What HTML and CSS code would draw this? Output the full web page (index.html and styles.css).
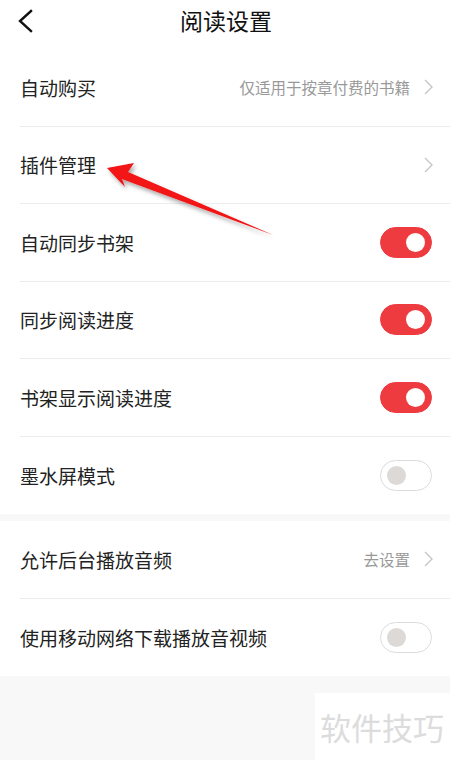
FILE: index.html
```html
<!DOCTYPE html>
<html lang="zh-CN">
<head>
<meta charset="utf-8">
<title>阅读设置</title>
<link rel="stylesheet" href="styles.css">
</head>
<body>
<div class="page">
  <header class="header">
    <svg class="back" width="16" height="24" viewBox="0 0 16 24"><path d="M14 2 L3 12 L14 22" fill="none" stroke="#111" stroke-width="2.4" stroke-linecap="square"/></svg>
    <h1 class="title">阅读设置</h1>
  </header>
  <section class="group">
    <div class="row"><span class="label">自动购买</span><span class="right"><span class="hint">仅适用于按章付费的书籍</span><svg class="chev" width="9" height="16" viewBox="0 0 9 16"><path d="M1 1 L8 8 L1 15" fill="none" stroke="#c6c6c6" stroke-width="1.4"/></svg></span></div>
    <div class="row"><span class="label">插件管理</span><span class="right"><svg class="chev" width="9" height="16" viewBox="0 0 9 16"><path d="M1 1 L8 8 L1 15" fill="none" stroke="#c6c6c6" stroke-width="1.4"/></svg></span></div>
    <div class="row"><span class="label">自动同步书架</span><span class="toggle on"><span class="knob"></span></span></div>
    <div class="row"><span class="label">同步阅读进度</span><span class="toggle on"><span class="knob"></span></span></div>
    <div class="row"><span class="label">书架显示阅读进度</span><span class="toggle on"><span class="knob"></span></span></div>
    <div class="row last"><span class="label">墨水屏模式</span><span class="toggle"><span class="knob"></span></span></div>
  </section>
  <section class="group">
    <div class="row"><span class="label">允许后台播放音频</span><span class="right"><span class="hint">去设置</span><svg class="chev" width="9" height="16" viewBox="0 0 9 16"><path d="M1 1 L8 8 L1 15" fill="none" stroke="#c6c6c6" stroke-width="1.4"/></svg></span></div>
    <div class="row last"><span class="label">使用移动网络下载播放音视频</span><span class="toggle"><span class="knob"></span></span></div>
  </section>
  <div class="rest"></div>
</div>
<svg class="arrow" width="450" height="260" viewBox="0 0 450 260">
  <defs>
    <filter id="sh" x="-20%" y="-20%" width="140%" height="160%">
      <feDropShadow dx="2" dy="3" stdDeviation="2" flood-color="#000" flood-opacity="0.35"/>
    </filter>
  </defs>
  <polygon points="107,168 134,163 128,172 273,235 122,179 125,187" fill="#f21212" filter="url(#sh)"/>
</svg>
<div class="watermark">软件技巧</div>
</body>
</html>
```
FILE: styles.css
```css
html, body {
  margin: 0;
  padding: 0;
  background: #f8f8f8;
}
body {
  font-family: "Noto Sans CJK SC", "Noto Sans", sans-serif;
  color: #222;
  width: 450px;
  height: 760px;
  overflow: hidden;
  position: relative;
}
.page {
  display: flex;
  flex-direction: column;
  height: 760px;
}
.header {
  height: 49px;
  background: #fff;
  display: flex;
  align-items: flex-start;
  justify-content: center;
  position: relative;
}
.back {
  position: absolute;
  left: 17px;
  top: 9px;
}
.title {
  margin: 0;
  font-size: 23px;
  font-weight: 400;
  line-height: 40px;
  color: #111;
  padding-left: 2px;
}
.group {
  background: #fff;
  padding-left: 20px;
  margin-bottom: 7px;
}
.group:last-of-type {
  margin-bottom: 0;
}
.row {
  height: 77.5px;
  box-sizing: border-box;
  border-bottom: 1px solid #ececec;
  display: flex;
  align-items: center;
  justify-content: space-between;
  padding-right: 18px;
}
.row.last {
  border-bottom: none;
}
.label {
  font-size: 19px;
  color: #222;
}
.right {
  display: flex;
  align-items: center;
  gap: 14px;
}
.hint {
  font-size: 15.5px;
  color: #999;
}
.chev {
  display: block;
  margin-right: -1px;
}
.toggle {
  width: 52px;
  height: 31px;
  box-sizing: border-box;
  border-radius: 16px;
  border: 1px solid #dcdcdc;
  background: #fff;
  display: flex;
  align-items: center;
  padding: 0 6px;
}
.toggle .knob {
  width: 19px;
  height: 19px;
  border-radius: 50%;
  background: #dcd9d6;
}
.toggle.on {
  background: #ee3b40;
  border-color: #ee3b40;
  justify-content: flex-end;
}
.toggle.on .knob {
  background: #fff;
}
.rest {
  flex: 1;
  background: #f8f8f8;
}
.arrow {
  position: absolute;
  left: 0;
  top: 0;
  pointer-events: none;
}
.watermark {
  position: absolute;
  left: 315px;
  top: 693px;
  width: 135px;
  height: 67px;
  background: #fff;
  color: #dcdcdc;
  font-size: 31px;
  line-height: 67px;
  padding-left: 5px;
  box-sizing: border-box;
}
```
